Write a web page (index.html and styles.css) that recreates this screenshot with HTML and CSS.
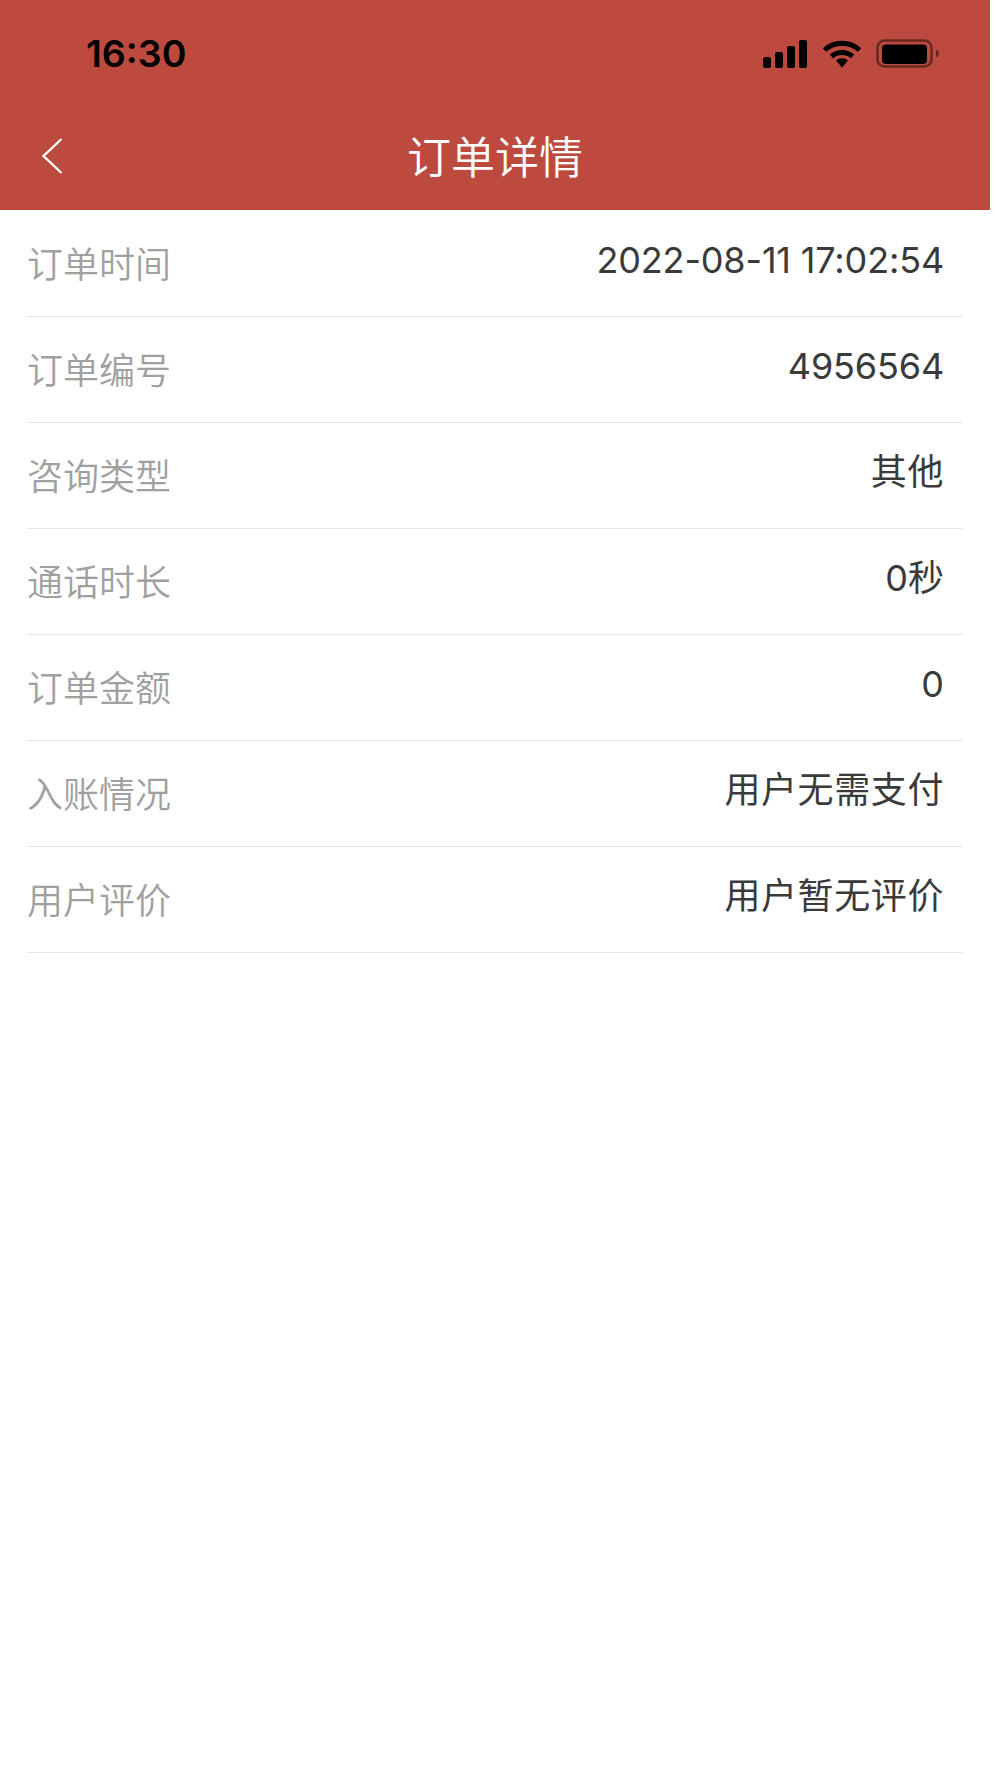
FILE: index.html
```html
<!DOCTYPE html>
<html lang="zh-CN">
<head>
<meta charset="utf-8">
<title>订单详情</title>
<link rel="stylesheet" href="styles.css">
</head>
<body>
<div class="page">
<header class="header">
  <div class="status">
    <span class="time">16:30</span>
    <div class="status-icons">
      <svg class="signal" width="46" height="30" viewBox="0 0 46 30"><rect x="1" y="18" width="8" height="11" rx="2.5"/><rect x="13" y="13" width="8" height="16" rx="2"/><rect x="25" y="7" width="8" height="22" rx="2"/><rect x="37" y="1" width="8" height="28" rx="2"/></svg>
      <svg class="wifi" width="40" height="30" viewBox="0 0 40 30"><path d="M2.5 11 A26 26 0 0 1 37.5 11" fill="none" stroke="#000" stroke-width="5"/><path d="M9.5 17.5 A16 16 0 0 1 30.5 17.5" fill="none" stroke="#000" stroke-width="5"/><path d="M14 21.5 A9 9 0 0 1 26 21.5 L20 28.5 Z" fill="#000"/></svg>
      <svg class="battery" width="66" height="30" viewBox="0 0 66 30"><rect x="1.5" y="1.5" width="54" height="26" rx="7" fill="none" stroke="#000" stroke-opacity=".45" stroke-width="2.5"/><rect x="6" y="5.5" width="45" height="19.5" rx="4"/><path d="M60 10.5 C62 11.5 63 13 63 14.5 C63 16 62 17.5 60 18.5 Z" fill-opacity=".45"/></svg>
    </div>
  </div>
  <div class="nav">
    <svg class="back" width="24" height="38" viewBox="0 0 24 38"><path d="M20.5 2 L2.5 19 L20.5 36" fill="none" stroke="#fff" stroke-width="2.4"/></svg>
    <h1 class="title">订单详情</h1>
  </div>
</header>
<main class="list">
  <div class="row"><span class="label">订单时间</span><span class="value num">2022-08-11 17:02:54</span></div>
  <div class="row"><span class="label">订单编号</span><span class="value num">4956564</span></div>
  <div class="row"><span class="label">咨询类型</span><span class="value cjk">其他</span></div>
  <div class="row"><span class="label">通话时长</span><span class="value">0秒</span></div>
  <div class="row"><span class="label">订单金额</span><span class="value">0</span></div>
  <div class="row"><span class="label">入账情况</span><span class="value cjk">用户无需支付</span></div>
  <div class="row"><span class="label">用户评价</span><span class="value cjk">用户暂无评价</span></div>
</main>
</div>
</body>
</html>
```
FILE: styles.css
```css
* { box-sizing: border-box; }
html, body { margin: 0; padding: 0; }
body {
  width: 1000px;
  height: 1778px;
  background: #fff;
  font-family: "Inter", "Noto Sans CJK SC", sans-serif;
  overflow: hidden;
}
.page { width: 990px; }
.header {
  height: 210px;
  background: #bc4a3f;
  display: flex;
  flex-direction: column;
}
.status {
  height: 108px;
  padding: 32px 48px 0 86px;
  display: flex;
  justify-content: space-between;
  align-items: flex-start;
}
.time {
  font-family: "Inter", sans-serif;
  font-size: 37.5px;
  font-weight: 600;
  line-height: 44px;
  color: #000;
}
.status-icons {
  display: flex;
  align-items: center;
  gap: 14px;
  padding-top: 7px;
}
.nav {
  flex: 1;
  display: flex;
  align-items: center;
  justify-content: center;
  position: relative;
  padding-bottom: 18px;
}
.back { position: absolute; left: 41px; top: 29px; }
.title {
  margin: 0;
  font-family: "Noto Sans CJK SC", sans-serif;
  font-size: 44px;
  font-weight: 350;
  line-height: 60px;
  color: #fff;
  transform: translateY(5px);
}
.list { padding: 1px 27px 0; }
.row {
  height: 106px;
  border-bottom: 1px solid #e8e8e8;
  display: flex;
  justify-content: space-between;
  align-items: center;
  padding-right: 19px;
}
.label {
  font-family: "Noto Sans CJK SC", sans-serif;
  font-size: 36px;
  font-weight: 350;
  color: #a0a0a0;
  line-height: 50px;
  transform: translateY(-2px);
}
.value {
  font-size: 36px;
  font-weight: 400;
  color: #3a3a3a;
  line-height: 50px;
  transform: translateY(-4px);
}
.num { letter-spacing: -0.15px; }
.cjk { letter-spacing: 0.6px; }
```
